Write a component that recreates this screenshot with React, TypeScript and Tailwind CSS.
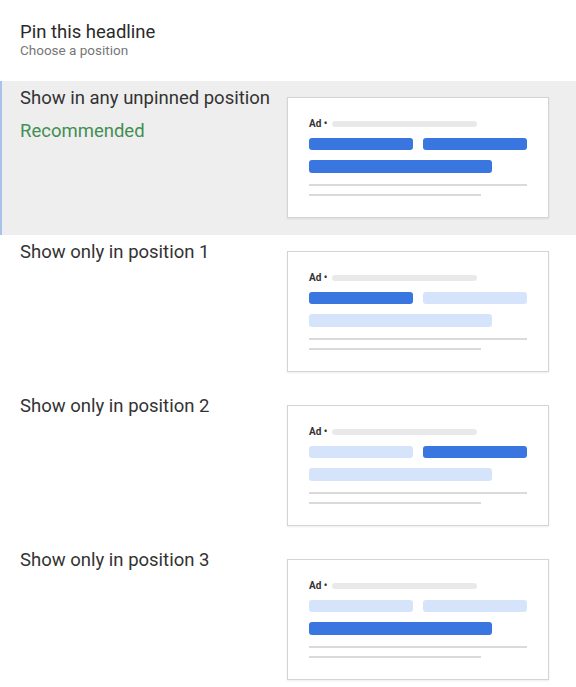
const options = [
  { label: "Show in any unpinned position", pins: [true, true, true], recommended: true },
  { label: "Show only in position 1", pins: [true, false, false] },
  { label: "Show only in position 2", pins: [false, true, false] },
  { label: "Show only in position 3", pins: [false, false, true] },
];

function AdPreview({ pins }: { pins: boolean[] }) {
  const bar = (on: boolean) => (on ? "bg-[#3a76e0]" : "bg-[#d6e4fb]");
  return (
    <div className="w-[262px] h-[121px] shrink-0 bg-white border border-[#d4d4d4] shadow-[0_1px_2px_rgba(0,0,0,0.08)] pl-[21px] pt-[19px]">
      <div className="flex items-center h-[14px]">
        <span className="text-[10px] font-bold text-[#333] leading-none">Ad •</span>
        <div className="ml-[5px] w-[145px] h-[6px] rounded-full bg-[#e9e9e9]" />
      </div>
      <div className="flex gap-[10px] mt-[7px]">
        <div className={`w-[104px] h-[12px] rounded-[3px] ${bar(pins[0])}`} />
        <div className={`w-[104px] h-[12px] rounded-[3px] ${bar(pins[1])}`} />
      </div>
      <div className={`w-[183px] h-[13px] rounded-[3px] mt-[10px] ${bar(pins[2])}`} />
      <div className="w-[218px] h-[2px] bg-[#dadada] mt-[11px]" />
      <div className="w-[172px] h-[2px] bg-[#dadada] mt-[8px]" />
    </div>
  );
}

export default function App() {
  return (
    <div className="w-[576px] h-[687px] bg-white overflow-hidden" style={{ fontFamily: "Roboto, 'Noto Sans', sans-serif" }}>
      <div className="pl-5 pt-[22px] h-[81px]">
        <div className="text-[18.5px] leading-[20px] text-[#2a2a2a]">Pin this headline</div>
        <div className="text-[13.5px] leading-[16px] text-[#777]">Choose a position</div>
      </div>
      {options.map((o) => (
        <div
          key={o.label}
          className={`flex justify-between h-[154px] pt-4 pr-[27px] ${
            o.recommended ? "bg-[#eeeeee] border-l-2 border-[#a9c2ea] pl-[18px]" : "pl-5"
          }`}
        >
          <div className="-mt-[10px]">
            <div className="text-[18.5px] leading-[22px] text-[#333]">{o.label}</div>
            <div className={o.recommended ? "mt-[11px] text-[18.5px] leading-[22px] text-[#428f52]" : "hidden"}>
              Recommended
            </div>
          </div>
          <AdPreview pins={o.pins} />
        </div>
      ))}
    </div>
  );
}
